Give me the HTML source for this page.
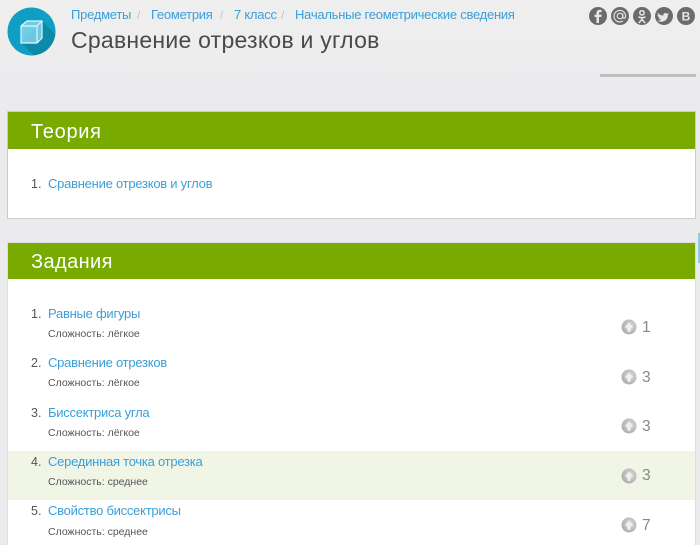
<!DOCTYPE html>
<html><head><meta charset="utf-8"><style>
html,body{margin:0;padding:0;width:700px;height:545px;overflow:hidden}
body{background:linear-gradient(#efefef 0,#ebebee 110px);position:relative;font-family:"Liberation Sans","DejaVu Sans",sans-serif}
#w{position:absolute;left:0;top:0;width:700px;height:545px;overflow:hidden}
.t{position:absolute;white-space:nowrap}
.l{color:#3a9fd8;font-size:13px;line-height:16px;letter-spacing:-.25px}
.s{color:#555;font-size:10.500px;line-height:14px;left:48px}
.n{color:#555;font-size:12.500px;line-height:16px;left:31px}
.c{color:#888;font-size:15.500px;line-height:18px;left:642px}
.b{color:#c4c4c4;font-size:12px;line-height:16px}
.h{position:absolute;left:8px;width:687px;background:#78aa00;color:#fff}
.box{position:absolute;left:7px;width:689px;background:#fff;border:1px solid #ccc;box-sizing:border-box}
</style></head><body><div id="w">
<svg style="position:absolute;left:7px;top:7px" width="49" height="49" viewBox="0 0 49 49">
<defs><clipPath id="c"><circle cx="24.5" cy="24.5" r="24"/></clipPath></defs>
<circle cx="24.5" cy="24.5" r="24" fill="#109fc4"/>
<path clip-path="url(#c)" d="M35 14 L62 41 L40 62 L14 36 Z" fill="#0d89aa"/>
<path d="M14 19 L20 14 H35 V31 L30 36 H14 Z" fill="#8fdcf2" opacity=".75"/>
<path d="M14 19 L20 14 H35 V31 L30 36 H14 Z M14 19 H30 V36 M30 19 L35 14" fill="none" stroke="#dcf7ff" stroke-width="1.200"/>
</svg>
<a class="t l" style="left:71px;top:7px">Предметы</a><span class="t b" style="left:137px;top:7px">/</span>
<a class="t l" style="left:151px;top:7px">Геометрия</a><span class="t b" style="left:220px;top:7px">/</span>
<a class="t l" style="left:234px;top:7px">7 класс</a><span class="t b" style="left:281px;top:7px">/</span>
<a class="t l" style="left:295px;top:7px">Начальные геометрические сведения</a>
<div class="t" style="left:71px;top:26px;font-size:23px;line-height:28px;color:#4a4a4a;letter-spacing:.25px">Сравнение отрезков и углов</div>
<svg style="position:absolute;left:589px;top:7px" width="108" height="19" viewBox="0 0 108 19">
<g fill="#6b6b6b"><circle cx="9" cy="9" r="9"/><circle cx="31" cy="9" r="9"/><circle cx="53" cy="9" r="9"/><circle cx="75" cy="9" r="9"/><circle cx="97" cy="9" r="9"/></g>
<path d="M10 16V10h2.300l.3-2.400H10V6.200c0-.7.3-1.100 1.200-1.100h1.400V3c-.5-.1-1.200-.1-1.900-.1-1.900 0-3.200 1.100-3.200 3.100v1.600H5.600V10h1.900v6z" fill="#e8e8e8"/>
<g fill="none" stroke="#e8e8e8" stroke-width="1.100"><circle cx="31" cy="9" r="2.800"/><path d="M33.800 6.500V10c0 2 2.800 1.800 2.800-1A5.800 5.800 0 1 0 34 14"/></g>
<g fill="none" stroke="#e8e8e8" stroke-width="1.500"><circle cx="53" cy="5.800" r="2.200"/><path d="M49.500 9.800c2 1.300 5 1.300 7 0M53 11v1.500M49.800 16l3.200-3.500 3.200 3.500"/></g>
<path d="M68.500 5.500c1.700 2 3.500 3 5.800 3.100-.3-2 1.900-3.400 3.500-2l1.700-.6-.9 1.400 1.400-.4-1.200 1.400c.1 4.500-5 8.200-10.300 5.300 1.400.1 2.700-.3 3.800-1.100-1.300-.1-2.300-.8-2.700-1.900h1.200c-1.400-.4-2.300-1.500-2.300-2.900l1.200.3c-1.200-.9-1.500-2.300-1.200-2.600z" fill="#e8e8e8"/>
<text x="97" y="13.500" text-anchor="middle" font-family="Liberation Sans" font-weight="700" font-size="12" fill="#e8e8e8">В</text>
</svg>
<div style="position:absolute;left:600px;top:74px;width:96px;height:3px;background:#bdbdbd"></div>

<div class="box" style="top:111px;height:108px"></div>
<div class="h" style="top:112px;height:37px"></div>
<div class="t" style="left:31px;top:119px;font-size:20px;line-height:26px;color:#fff;letter-spacing:.7px">Теория</div>
<span class="t n" style="top:176px">1.</span><a class="t l" style="left:48px;top:176px">Сравнение отрезков и углов</a>

<div class="box" style="top:242px;height:303px;border-color:#ddd;border-bottom:0"></div>
<div class="h" style="top:243px;height:36px"></div>
<div class="t" style="left:31px;top:249px;font-size:20px;line-height:26px;color:#fff;letter-spacing:.4px">Задания</div>
<div style="position:absolute;left:8px;top:451px;width:687px;height:49px;background:#f0f5e6"></div>
<div style="position:absolute;left:698px;top:233px;width:2px;height:30px;background:#8fcbe6"></div>

<span class="t n" style="top:306px">1.</span><a class="t l" style="left:48px;top:306px">Равные фигуры</a><span class="t s" style="top:327px">Сложность: лёгкое</span>
<span class="t n" style="top:355px">2.</span><a class="t l" style="left:48px;top:355px">Сравнение отрезков</a><span class="t s" style="top:376px">Сложность: лёгкое</span>
<span class="t n" style="top:405px">3.</span><a class="t l" style="left:48px;top:405px">Биссектриса угла</a><span class="t s" style="top:426px">Сложность: лёгкое</span>
<span class="t n" style="top:454px">4.</span><a class="t l" style="left:48px;top:454px">Серединная точка отрезка</a><span class="t s" style="top:475px">Сложность: среднее</span>
<span class="t n" style="top:503px">5.</span><a class="t l" style="left:48px;top:503px">Свойство биссектрисы</a><span class="t s" style="top:525px">Сложность: среднее</span>

<svg style="position:absolute;left:621px;top:319px" width="17" height="220" viewBox="0 0 17 220">
<defs><radialGradient id="g" cx=".6" cy=".4" r=".7"><stop offset="0" stop-color="#d8d8d8"/><stop offset="1" stop-color="#a8a8a8"/></radialGradient><g id="u"><circle cx="8" cy="8" r="7.500" fill="url(#g)"/><path d="M8 3.500 L12.500 8.500 H10.500 L9 13 H7 L5.500 8.500 H3.500 Z" fill="#f0f0f0"/></g></defs>
<use href="#u" y="0"/><use href="#u" y="50"/><use href="#u" y="99"/><use href="#u" y="149"/><use href="#u" y="198"/>
</svg>
<span class="t c" style="top:319px">1</span>
<span class="t c" style="top:369px">3</span>
<span class="t c" style="top:418px">3</span>
<span class="t c" style="top:467px">3</span>
<span class="t c" style="top:517px">7</span>
</div></body></html>
